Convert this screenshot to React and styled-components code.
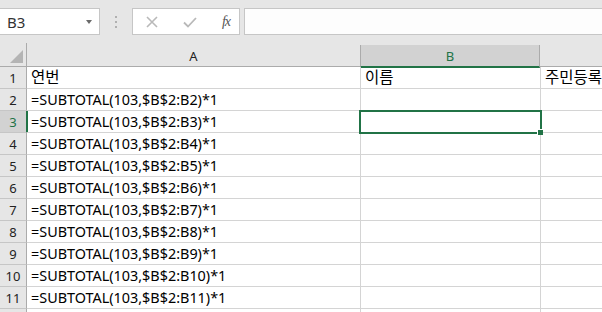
import React from "react";
import styled, { createGlobalStyle } from "styled-components";

const GlobalStyle = createGlobalStyle`
	html, body {
		margin: 0;
		padding: 0;
		background: #ffffff;
		overflow: hidden;
	}
`;

const COLS = [
	{ key: "A", width: 334 },
	{ key: "B", width: 180 },
	{ key: "C", width: 120 },
];

// row 1 headings, rows 2-11 formulas, row 12 is only peeking in
const ROWS = [
	["연번", "이름", "주민등록번호"],
	...Array.from({ length: 10 }, (_, i) => [`=SUBTOTAL(103,$B$2:B${i + 2})*1`, "", ""]),
	["", "", ""],
];

const SELECTED = { row: 3, col: "B" };

function App() {
	return (
		<>
			<GlobalStyle />
			<Sheet>
				<FormulaBar>
					<NameBox>
						<NameText>B3</NameText>
						<DropArrow />
					</NameBox>
					<Grip>
						<Dot />
						<Dot />
						<Dot />
					</Grip>
					<ButtonBox>
						<svg width="14" height="14" viewBox="0 0 14 14">
							<path d="M2 2 L12 12 M12 2 L2 12" stroke="#b9b9b9" strokeWidth="1.6" fill="none" />
						</svg>
						<svg width="16" height="14" viewBox="0 0 16 14">
							<path d="M2 7.5 L6 11.5 L14 3" stroke="#b9b9b9" strokeWidth="1.8" fill="none" />
						</svg>
						<Fx>fx</Fx>
					</ButtonBox>
					<FormulaInput />
				</FormulaBar>

				<HeaderRow>
					<Corner>
						<CornerTriangle />
					</Corner>
					{COLS.map((c) => (
						<ColHeader key={c.key} $w={c.width} $active={c.key === SELECTED.col}>
							{c.key === "C" ? "" : c.key}
						</ColHeader>
					))}
				</HeaderRow>

				{ROWS.map((r, i) => (
					<Row key={i}>
						<RowHeader $active={i + 1 === SELECTED.row}>{i < 11 ? i + 1 : ""}</RowHeader>
						{COLS.map((c, j) => (
							<Cell key={c.key} $w={c.width} $heading={i === 0}>
								{r[j]}
								{i + 1 === SELECTED.row && c.key === SELECTED.col && (
									<Selection>
										<Handle />
									</Selection>
								)}
							</Cell>
						))}
					</Row>
				))}
			</Sheet>
		</>
	);
}

const Sheet = styled.div`
	width: 602px;
	height: 312px;
	overflow: hidden;
	font-family: "Noto Sans", "Noto Sans CJK KR", sans-serif;
	background: #ffffff;
`;

const FormulaBar = styled.div`
	display: flex;
	align-items: flex-start;
	height: 45px;
	padding-top: 8px;
	box-sizing: border-box;
	background: #e6e6e6;
`;

const NameBox = styled.div`
	display: flex;
	align-items: center;
	justify-content: space-between;
	width: 100px;
	height: 27px;
	box-sizing: border-box;
	border: 1px solid #c6c6c6;
	border-left: none;
	background: #ffffff;
	padding: 0 7px 0 7px;
`;

const NameText = styled.span`
	font-size: 15px;
	color: #333333;
`;

const DropArrow = styled.span`
	width: 0;
	height: 0;
	border-left: 3.5px solid transparent;
	border-right: 3.5px solid transparent;
	border-top: 4px solid #6a6a6a;
`;

const Grip = styled.div`
	display: flex;
	flex-direction: column;
	align-items: center;
	justify-content: center;
	gap: 3px;
	width: 32px;
	height: 27px;
`;

const Dot = styled.span`
	width: 2px;
	height: 2px;
	background: #b0b0b0;
`;

const ButtonBox = styled.div`
	display: flex;
	align-items: center;
	justify-content: space-between;
	width: 108px;
	height: 27px;
	box-sizing: border-box;
	border: 1px solid #c6c6c6;
	background: #ffffff;
	padding: 0 9px 0 12px;
	margin-right: 4px;
`;

const Fx = styled.span`
	font-family: "Liberation Serif", serif;
	font-style: italic;
	font-size: 14px;
	color: #555555;
	letter-spacing: -1px;
`;

const FormulaInput = styled.div`
	flex: 1;
	height: 27px;
	box-sizing: border-box;
	border: 1px solid #c6c6c6;
	border-right: none;
	background: #fdfdfd;
`;

const HeaderRow = styled.div`
	display: flex;
	height: 22px;
	background: #e6e6e6;
`;

const Corner = styled.div`
	position: relative;
	width: 27px;
	flex: none;
	border-right: 1px solid #ababab;
	border-bottom: 1px solid #ababab;
	box-sizing: border-box;
	margin-top: -2px;
	height: 24px;
`;

const CornerTriangle = styled.span`
	position: absolute;
	right: 3px;
	bottom: 3px;
	width: 0;
	height: 0;
	border-left: 13px solid transparent;
	border-bottom: 13px solid #b4b4b4;
`;

const ColHeader = styled.div`
	width: ${(p) => p.$w}px;
	flex: none;
	box-sizing: border-box;
	display: flex;
	align-items: center;
	justify-content: center;
	font-size: 13px;
	padding-top: 1px;
	color: ${(p) => (p.$active ? "#217346" : "#222222")};
	background: ${(p) => (p.$active ? "#d2d2d2" : "transparent")};
	border-right: 1px solid ${(p) => (p.$active ? "#ababab" : "#c6c6c6")};
	border-left: ${(p) => (p.$active ? "1px solid #ababab" : "none")};
	margin-left: ${(p) => (p.$active ? "-1px" : "0")};
	border-bottom: ${(p) => (p.$active ? "2px solid #217346" : "1px solid #ababab")};
	height: ${(p) => (p.$active ? "23px" : "22px")};
	margin-bottom: ${(p) => (p.$active ? "-1px" : "0")};
`;

const Row = styled.div`
	display: flex;
	height: 22px;
`;

const RowHeader = styled.div`
	width: ${(p) => (p.$active ? "28px" : "27px")};
	margin-right: ${(p) => (p.$active ? "-1px" : "0")};
	flex: none;
	box-sizing: border-box;
	display: flex;
	align-items: center;
	justify-content: center;
	font-size: 13px;
	color: ${(p) => (p.$active ? "#217346" : "#222222")};
	background: ${(p) => (p.$active ? "#d2d2d2" : "#e6e6e6")};
	border-bottom: 1px solid #c6c6c6;
	border-right: ${(p) => (p.$active ? "2px solid #217346" : "1px solid #ababab")};
`;

const Cell = styled.div`
	position: relative;
	width: ${(p) => p.$w}px;
	flex: none;
	box-sizing: border-box;
	border-right: 1px solid #d4d4d4;
	border-bottom: 1px solid #d4d4d4;
	padding: 0 0 0 4px;
	font-size: ${(p) => (p.$heading ? "15.5px" : "14.4px")};
	line-height: 21px;
	color: #000000;
	white-space: nowrap;
`;

const Selection = styled.span`
	position: absolute;
	left: -2px;
	top: -1px;
	width: 183px;
	height: 24px;
	box-sizing: border-box;
	border: 2px solid #217346;
	z-index: 2;
`;

const Handle = styled.span`
	position: absolute;
	right: -3px;
	bottom: -3px;
	width: 5px;
	height: 5px;
	background: #217346;
	border: 1px solid #ffffff;
	border-right: none;
	border-bottom: none;
`;

export default App;
